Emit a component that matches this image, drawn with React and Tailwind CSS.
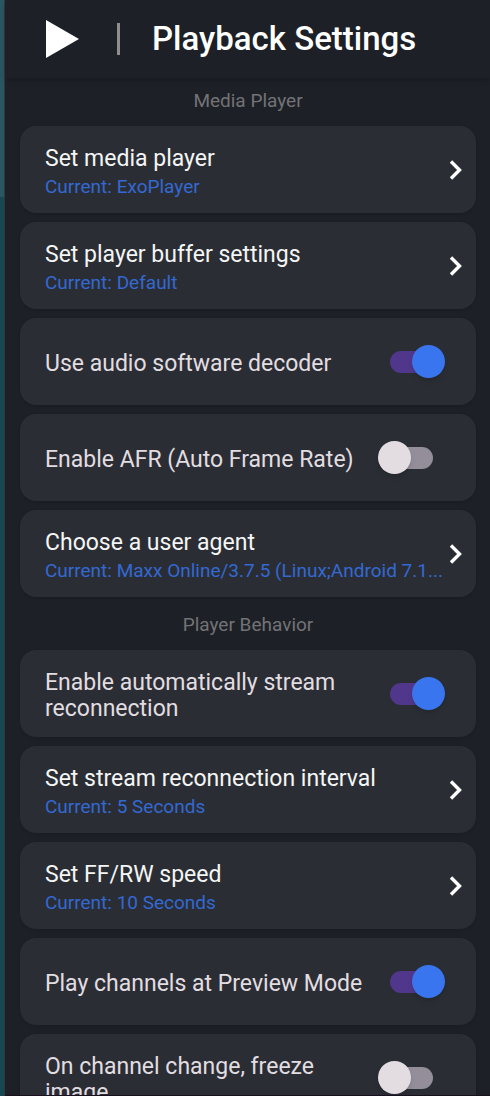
import React, { useState } from 'react';

const playerItems = [
  { title: 'Set media player', current: 'ExoPlayer' },
  { title: 'Set player buffer settings', current: 'Default' },
  { id: 'audio-decoder', title: 'Use audio software decoder', on: true },
  { id: 'afr', title: 'Enable AFR (Auto Frame Rate)', on: false },
  { title: 'Choose a user agent', current: 'Maxx Online/3.7.5 (Linux;Android 7.1...' },
];

const behaviorItems = [
  { id: 'reconnect', title: 'Enable automatically stream reconnection', on: true },
  { title: 'Set stream reconnection interval', current: '5 Seconds' },
  { title: 'Set FF/RW speed', current: '10 Seconds' },
  { id: 'preview', title: 'Play channels at Preview Mode', on: true },
  { id: 'freeze', title: 'On channel change, freeze image', on: false },
];

const cardClass = 'flex h-[87px] w-full shrink-0 items-center rounded-2xl bg-[#2a2e34] pl-[25px] text-left shadow';

const LinkRow = ({ title, current }) => (
  <button type="button" className={`${cardClass} pr-3`}>
    <span className="min-w-0 flex-1 pt-[5px]">
      <span className="block truncate text-[23px] leading-[29px] text-[#f5f5f5]">{title}</span>
      <span className="block truncate text-[19px] leading-[28px] text-[#3468d2]">Current: {current}</span>
    </span>
    <svg className="ml-1 shrink-0" width="16" height="20" viewBox="0 0 16 20" fill="none" aria-hidden="true">
      <path d="M3 1.5 L11.5 10 L3 18.5" stroke="#fff" strokeWidth="3.4" />
    </svg>
  </button>
);

const SwitchRow = ({ id, title, on }) => {
  const [checked, setChecked] = useState(on);

  return (
    <div className={`${cardClass} gap-3 pr-[31px]`}>
      <label htmlFor={id} className="min-w-0 flex-1 pt-1 text-[23px] leading-[26px] text-[#e2dde1]">
        {title}
      </label>
      <input
        type="checkbox"
        role="switch"
        id={id}
        checked={checked}
        onChange={(e) => setChecked(e.target.checked)}
        className="flex h-[33px] w-[67px] shrink-0 cursor-pointer appearance-none items-center before:ml-3 before:h-[22px] before:w-[43px] before:shrink-0 before:rounded-full before:bg-[#938e99] before:content-[''] after:-ml-[55px] after:size-[33px] after:shrink-0 after:rounded-full after:bg-[#e3dde2] after:shadow-md after:content-[''] checked:before:bg-[#51378b] checked:after:-ml-[21px] checked:after:bg-[#3a75f0]"
      />
    </div>
  );
};

const Section = ({ title, items }) => (
  <section>
    <h2 className="h-12 text-center text-[19px] leading-[46px] text-[#737375]">{title}</h2>
    <div className="flex flex-col gap-[9px]">
      {items.map((item) =>
        item.id ? <SwitchRow key={item.title} {...item} /> : <LinkRow key={item.title} {...item} />
      )}
    </div>
  </section>
);

const App = () => {
  return (
    <div className="flex h-screen bg-[#1d2027] font-[Roboto,sans-serif]">
      {/* edge of the screen behind the panel */}
      <div className="flex w-1 shrink-0 flex-col bg-[#154850]">
        <div className="h-[197px] bg-[#2a5661]" />
      </div>

      <div className="flex min-w-0 flex-1 flex-col border-l border-[#33363b]">
        <header className="flex h-[78px] shrink-0 items-center bg-[#1d2027] pl-10 shadow-md">
          <svg width="36" height="38" viewBox="0 0 36 38" aria-hidden="true">
            <path d="M1 0 L34 19 L1 38 Z" fill="#fff" />
          </svg>
          <div className="ml-9 h-8 w-[3px] bg-[#918c8c]" />
          <h1 className="ml-8 text-[33px] font-medium leading-10 text-white">Playback Settings</h1>
        </header>

        <main className="flex min-h-0 flex-1 flex-col gap-[5px] overflow-y-auto pl-[15px] pr-[14px] [scrollbar-width:none]">
          <Section title="Media Player" items={playerItems} />
          <Section title="Player Behavior" items={behaviorItems} />
        </main>
        <div className="h-px shrink-0 bg-[#1a1120]" />
      </div>
    </div>
  );
};

export default App;
